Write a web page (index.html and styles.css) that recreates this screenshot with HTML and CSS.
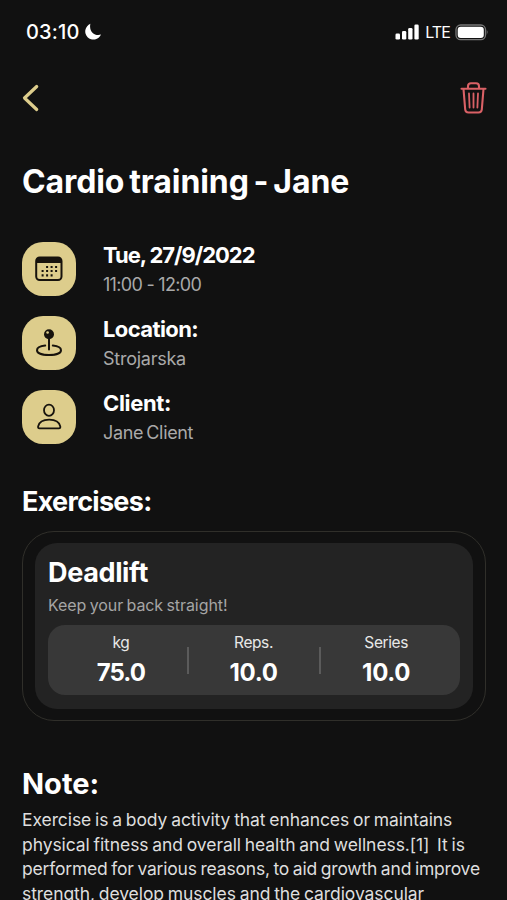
FILE: index.html
```html
<!DOCTYPE html>
<html lang="en">
<head>
<meta charset="utf-8">
<title>Cardio training - Jane</title>
<link rel="stylesheet" href="styles.css">
</head>
<body>
<main class="screen">
  <div class="status">
    <div class="status-left">
      <span class="time">03:10</span>
      <svg width="18" height="18" viewBox="0 0 18 18"><path d="M6.4 0.8A8.2 8.2 0 1 0 17 11.6C10.5 13.6 4.6 8 6.4 0.8Z" fill="#fff"/></svg>
    </div>
    <div class="status-right">
      <svg width="25" height="16" viewBox="0 0 25 16" fill="#fff"><rect x="0.5" y="9.5" width="4.5" height="6" rx="1.3"/><rect x="7" y="7" width="4.3" height="8.5" rx="1.3"/><rect x="13.2" y="4" width="4.3" height="11.5" rx="1.3"/><rect x="19.4" y="0.5" width="4.3" height="15" rx="1.3"/></svg>
      <span class="lte">LTE</span>
      <svg width="34" height="17" viewBox="0 0 34 17"><rect x="1" y="1" width="29.5" height="14.6" rx="4.6" fill="none" stroke="#777" stroke-width="1.3"/><rect x="2.7" y="2.7" width="26.1" height="11.2" rx="3" fill="#fff"/><path d="M31.8 5.7Q33.6 8.3 31.8 11Z" fill="#888"/></svg>
    </div>
  </div>
  <nav class="toolbar">
    <svg width="18" height="28" viewBox="0 0 18 28"><path d="M14.7 2.5L2.5 14L14.7 25.5" fill="none" stroke="#ddcd8c" stroke-width="3.2" stroke-linecap="round" stroke-linejoin="round"/></svg>
    <svg width="27" height="32" viewBox="0 0 27 32" fill="none" stroke="#da6166" stroke-width="2.1" stroke-linecap="round" stroke-linejoin="round"><path d="M1.5 6.7H25.5M8 6V4.2Q8 1.3 11 1.3H16Q19 1.3 19 4.2V6M3.5 7L5.2 27.5Q5.5 30.5 8.5 30.5H18.5Q21.5 30.5 21.8 27.5L23.5 7"/><path d="M9 11.5L9.6 25.5M13.5 11.5V25.5M18 11.5L17.4 25.5" stroke-width="1.8"/></svg>
  </nav>
  <h1 class="title">Cardio training - Jane</h1>
  <section class="details">
    <div class="detail">
      <div class="tile"><svg width="28" height="28" viewBox="0 0 28 28"><rect x="1.2" y="2.5" width="25.3" height="22.6" rx="3.5" fill="none" stroke="#17130d" stroke-width="2"/><path d="M1.2 8V5.5Q1.2 2.5 4.2 2.5H23.5Q26.5 2.5 26.5 5.5V8Z" fill="#17130d"/><path d="M11.1 12h2M15.6 12h2M20.1 12h2M6.6 16h2M11.1 16h2M15.6 16h2M20.1 16h2M6.6 20.3h2M11.1 20.3h2M15.6 20.3h2" stroke="#17130d" stroke-width="2.2"/></svg></div>
      <div><h2 class="label date">Tue, 27/9/2022</h2><p class="value hours">11:00 - 12:00</p></div>
    </div>
    <div class="detail">
      <div class="tile"><svg width="28" height="28" viewBox="0 0 28 28"><circle cx="14" cy="5.2" r="5" fill="#17130d"/><circle cx="12.6" cy="3.5" r="1.3" fill="#ddcd8c"/><path d="M14 9V20.5" stroke="#17130d" stroke-width="2" stroke-linecap="round"/><path d="M10.2 16.5C5.2 17 2 18.8 2 21.2C2 24.2 7.2 26 14 26S26 24.2 26 21.2C26 18.8 22.8 17 17.8 16.5" fill="none" stroke="#17130d" stroke-width="2" stroke-linecap="round"/></svg></div>
      <div><h2 class="label location">Location:</h2><p class="value street">Strojarska</p></div>
    </div>
    <div class="detail">
      <div class="tile"><svg width="28" height="28" viewBox="0 0 28 28" fill="none" stroke="#17130d" stroke-width="1.8"><ellipse cx="14" cy="7.2" rx="5" ry="5.6"/><path d="M4.5 25.3Q2.8 25.3 3.1 23.5C4 19.3 8.4 16.7 14.2 16.7S24.4 19.3 25.3 23.5Q25.6 25.3 23.9 25.3Z"/></svg></div>
      <div><h2 class="label client">Client:</h2><p class="value name">Jane Client</p></div>
    </div>
  </section>
  <h2 class="heading">Exercises:</h2>
  <section class="frame">
    <article class="card">
      <h3 class="exercise">Deadlift</h3>
      <p class="hint">Keep your back straight!</p>
      <div class="stats">
        <div class="stat"><span class="unit">kg</span><b class="number weight">75.0</b></div>
        <i class="divider"></i>
        <div class="stat"><span class="unit">Reps.</span><b class="number">10.0</b></div>
        <i class="divider"></i>
        <div class="stat"><span class="unit">Series</span><b class="number">10.0</b></div>
      </div>
    </article>
  </section>
  <h2 class="heading note-heading">Note:</h2>
  <p class="note">Exercise is a body activity that enhances or maintains<br>physical fitness and overall health and wellness.[1]&nbsp; It is<br><span class="tight">performed for various reasons, to aid growth and improve</span><br>strength, develop muscles and the cardiovascular</p>
</main>
</body>
</html>
```
FILE: styles.css
```css
* { box-sizing: border-box; margin: 0; padding: 0; }
html, body { height: 900px; overflow: hidden; background: #111; }
body { font-family: Inter, "Liberation Sans", sans-serif; color: #fff; }
svg { display: block; flex: none; }
.screen { height: 900px; overflow: hidden; padding: 20px 20px 0 22px; white-space: nowrap; }
.status { display: flex; justify-content: space-between; align-items: center; height: 24px; }
.status-left, .status-right { display: flex; align-items: center; }
.status-left { gap: 4px; padding-left: 4px; }
.status-right { margin-right: -2px; }
.time { font-size: 20px; font-weight: 500; letter-spacing: 0.2px; }
.lte { font-size: 16px; font-weight: 400; letter-spacing: -0.9px; margin: 0 5px 0 5px; }
.toolbar { display: flex; justify-content: space-between; align-items: center; height: 32px; margin-top: 38px; }
.title { font-size: 32px; line-height: 40px; font-weight: 700; letter-spacing: -0.1px; word-spacing: -2.6px; margin-top: 48px; }
.details { display: grid; gap: 20px; margin-top: 40px; }
.detail { display: flex; gap: 27px; height: 54px; }
.tile { display: grid; place-items: center; width: 54px; height: 54px; border-radius: 21px; background: #ddcd8c; }
.label { font-size: 22px; line-height: 26px; font-weight: 700; letter-spacing: -0.6px; }
.date { letter-spacing: -1.05px; }
.client { letter-spacing: -0.35px; }
.value { font-size: 18px; line-height: 24px; margin-top: 5px; color: #a9a9a9; letter-spacing: -0.5px; }
.hours { letter-spacing: -0.7px; }
.street { letter-spacing: -0.25px; }
.name { letter-spacing: -0.35px; word-spacing: -1.5px; }
.heading { font-size: 27px; line-height: 34px; font-weight: 700; letter-spacing: -0.7px; margin-top: 41px; }
.frame { width: 464px; height: 190px; margin-top: 12px; padding: 11px 12px; border: 1px solid #302f2a; border-radius: 32px; }
.card { height: 166px; padding: 13px 13px; border-radius: 22px; background: #232323; }
.exercise { font-size: 27px; line-height: 34px; font-weight: 700; letter-spacing: -0.35px; }
.hint { font-size: 16px; line-height: 22px; color: #a5a5a5; margin-top: 4px; letter-spacing: -0.08px; word-spacing: -1px; }
.stats { display: flex; align-items: center; height: 70px; margin-top: 9px; padding: 0 8px; border-radius: 17px; background: #383838; }
.stat { flex: 1; display: flex; flex-direction: column; align-items: center; padding: 2px 1px 0 0; }
.unit { font-size: 15.5px; line-height: 20px; color: #e8e8e8; letter-spacing: -0.4px; }
.number { font-size: 24px; line-height: 32px; margin-top: 4px; font-weight: 700; letter-spacing: -0.3px; }
.weight { letter-spacing: -1px; }
.divider { width: 2px; height: 27px; background: #5b5b5b; }
.note-heading { font-size: 29px; letter-spacing: 0; margin-top: 46px; }
.note { font-size: 17.5px; line-height: 24.5px; color: #dedede; letter-spacing: -0.08px; word-spacing: -1px; margin-top: 7px; }
.tight { letter-spacing: -0.2px; }
```
